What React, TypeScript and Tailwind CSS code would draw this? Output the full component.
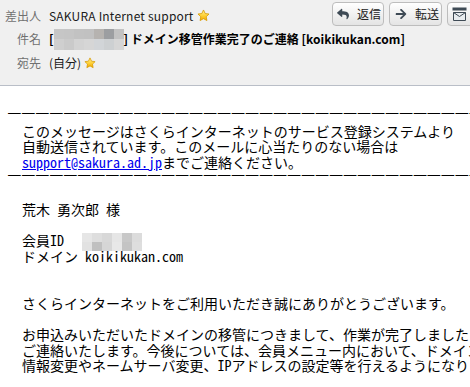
import React from 'react';
import { FaReply, FaArrowRight } from 'react-icons/fa';

// pixelated blur blocks that hide personal data
const Mosaic = ({ cols, cw, ch, colors }: { cols: number; cw: number; ch: number; colors: string[] }) => (
  <span
    className="inline-grid align-middle"
    style={{ gridTemplateColumns: `repeat(${cols}, ${cw}px)`, gridAutoRows: `${ch}px` }}
  >
    {colors.map((c, i) => (
      <span key={i} style={{ background: c }} />
    ))}
  </span>
);

const Star = ({ id, size = 13 }: { id: string; size?: number }) => (
  <svg width={size} height={size} viewBox="0 0 24 24" className="shrink-0">
    <defs>
      <linearGradient id={id} x1="0" y1="0" x2="0" y2="1">
        <stop offset="0" stopColor="#fff3a8" />
        <stop offset="0.5" stopColor="#ffd43b" />
        <stop offset="1" stopColor="#f2a900" />
      </linearGradient>
    </defs>
    <path
      d="M12 1.8l3.1 6.6 7.1.9-5.2 4.9 1.3 7.1L12 17.8l-6.3 3.5 1.3-7.1L1.8 9.3l7.1-.9z"
      fill={`url(#${id})`}
      stroke="#d69a00"
      strokeWidth="1.5"
      strokeLinejoin="round"
    />
  </svg>
);

// half-width run (latin / spaces) in the fixed-pitch body
const H = ({ children }: { children: React.ReactNode }) => (
  <span className="font-['Noto_Sans_Mono_CJK_JP','Liberation_Mono',monospace]">{children}</span>
);

// rule line: em dashes on a 14px pitch
const Dashes = () => (
  <div className="-ml-[14px] -translate-y-[2px] font-['Liberation_Sans',sans-serif] text-[12.7px] leading-[15.6px] tracking-[1.3px] text-black">
    {'—'.repeat(34)}
  </div>
);

const subjectMask = [
  '#c6c6c6', '#c5c5c5', '#c2c2c2', '#c1c1c1', '#b6b3b0', '#9c9ea1', '#c2c2c2',
  '#cfcfcf', '#cacaca', '#d3d3d3', '#d6d6d6', '#d2d5d8', '#cdd0d2', '#d6d6d6',
];

const memberMask = [
  '#e6e6e6', '#dedede', '#d8d8d8', '#e6e6e6', '#c8c8c8', '#dcdcdc',
  '#e2e2e2', '#c0c0c0', '#d6d6d6', '#e8e8e8', '#c4c4c4', '#dedede',
];

export default function App() {
  return (
    <div className="w-[470px] h-[387px] overflow-hidden bg-white">
      {/* Header */}
      <div className="bg-[#f0f0f0] border-b border-[#b9bec7] pt-[4px] pb-[10.5px] font-['Noto_Sans_CJK_JP',sans-serif] text-[12px] text-[#1a1a1a]">
        <div className="flex h-[23.5px] items-center">
          <div className="w-[41px] shrink-0 text-right text-[#707070]">差出人</div>
          <div className="ml-[8px] flex flex-1 items-center gap-[3px]">
            <span className="tracking-[0.2px]">SAKURA Internet support</span>
            <Star id="s1" />
          </div>
          <div className="flex w-[138px] shrink-0 gap-[5px] overflow-hidden -translate-y-[2px]">
            <button className="flex h-[24px] w-[52px] shrink-0 items-center gap-[8px] rounded-[4px] border border-[#bdbdbd] bg-linear-to-b from-[#ffffff] to-[#e4e4e4] pl-[4px] text-[#222]">
              <FaReply className="h-[12px] w-[12px] text-[#3e4a55]" />
              <span>返信</span>
            </button>
            <button className="flex h-[24px] w-[53px] shrink-0 items-center gap-[8px] rounded-[4px] border border-[#bdbdbd] bg-linear-to-b from-[#ffffff] to-[#e4e4e4] pl-[5px] text-[#222]">
              <FaArrowRight className="h-[12px] w-[12px] text-[#3e4a55]" />
              <span>転送</span>
            </button>
            <button className="flex h-[24px] w-[30px] shrink-0 items-center rounded-[4px] border border-[#bdbdbd] bg-linear-to-b from-[#ffffff] to-[#e4e4e4] pl-[4px]">
              <svg width="15" height="14" viewBox="0 0 15 14">
                <rect x="0.5" y="0.5" width="14" height="3" fill="#3e4a55" />
                <path d="M1.5 5.5h12v8h-12z" fill="#e8ecef" stroke="#3e4a55" />
                <path d="M1.5 5.5l6 4 6-4" fill="none" stroke="#3e4a55" />
              </svg>
            </button>
          </div>
        </div>
        <div className="flex h-[23.5px] items-center">
          <div className="w-[41px] shrink-0 text-right text-[#707070]">件名</div>
          <div className="ml-[8px] flex items-center whitespace-pre font-bold text-black">
            <span>[</span>
            <Mosaic cols={7} cw={10} ch={10.5} colors={subjectMask} />
            <span>] ドメイン移管作業完了のご連絡 [koikikukan.com]</span>
          </div>
        </div>
        <div className="flex h-[23.5px] items-center">
          <div className="w-[41px] shrink-0 text-right text-[#707070]">宛先</div>
          <div className="ml-[8px] flex items-center gap-[3px]">
            <span>(自分)</span>
            <Star id="s2" size={12} />
          </div>
        </div>
      </div>

      {/* Body */}
      <div className="pl-[22px] pt-[22px] font-['Noto_Sans_CJK_JP',sans-serif] text-[14px] leading-[15.6px] whitespace-pre text-black">
        <Dashes />
        <div>このメッセージはさくらインターネットのサービス登録システムより</div>
        <div>自動送信されています。このメールに心当たりのない場合は</div>
        <div>
          <a className="text-[#0000ee] underline">
            <H>support@sakura.ad.jp</H>
          </a>
          までご連絡ください。
        </div>
        <Dashes />
        <div>&nbsp;</div>
        <div>
          荒木<H> </H>勇次郎<H> </H>様
        </div>
        <div>&nbsp;</div>
        <div>
          会員<H>ID</H>
          <span className="ml-[18px] inline-block -my-[2px]">
            <Mosaic cols={6} cw={10} ch={9} colors={memberMask} />
          </span>
        </div>
        <div>
          ドメイン<H> koikikukan.com</H>
        </div>
        <div>&nbsp;</div>
        <div>&nbsp;</div>
        <div>さくらインターネットをご利用いただき誠にありがとうございます。</div>
        <div>&nbsp;</div>
        <div>お申込みいただいたドメインの移管につきまして、作業が完了しました</div>
        <div>ご連絡いたします。今後については、会員メニュー内において、ドメイン</div>
        <div>
          情報変更やネームサーバ変更、<H>IP</H>アドレスの設定等を行えるようになりました。
        </div>
      </div>
    </div>
  );
}
